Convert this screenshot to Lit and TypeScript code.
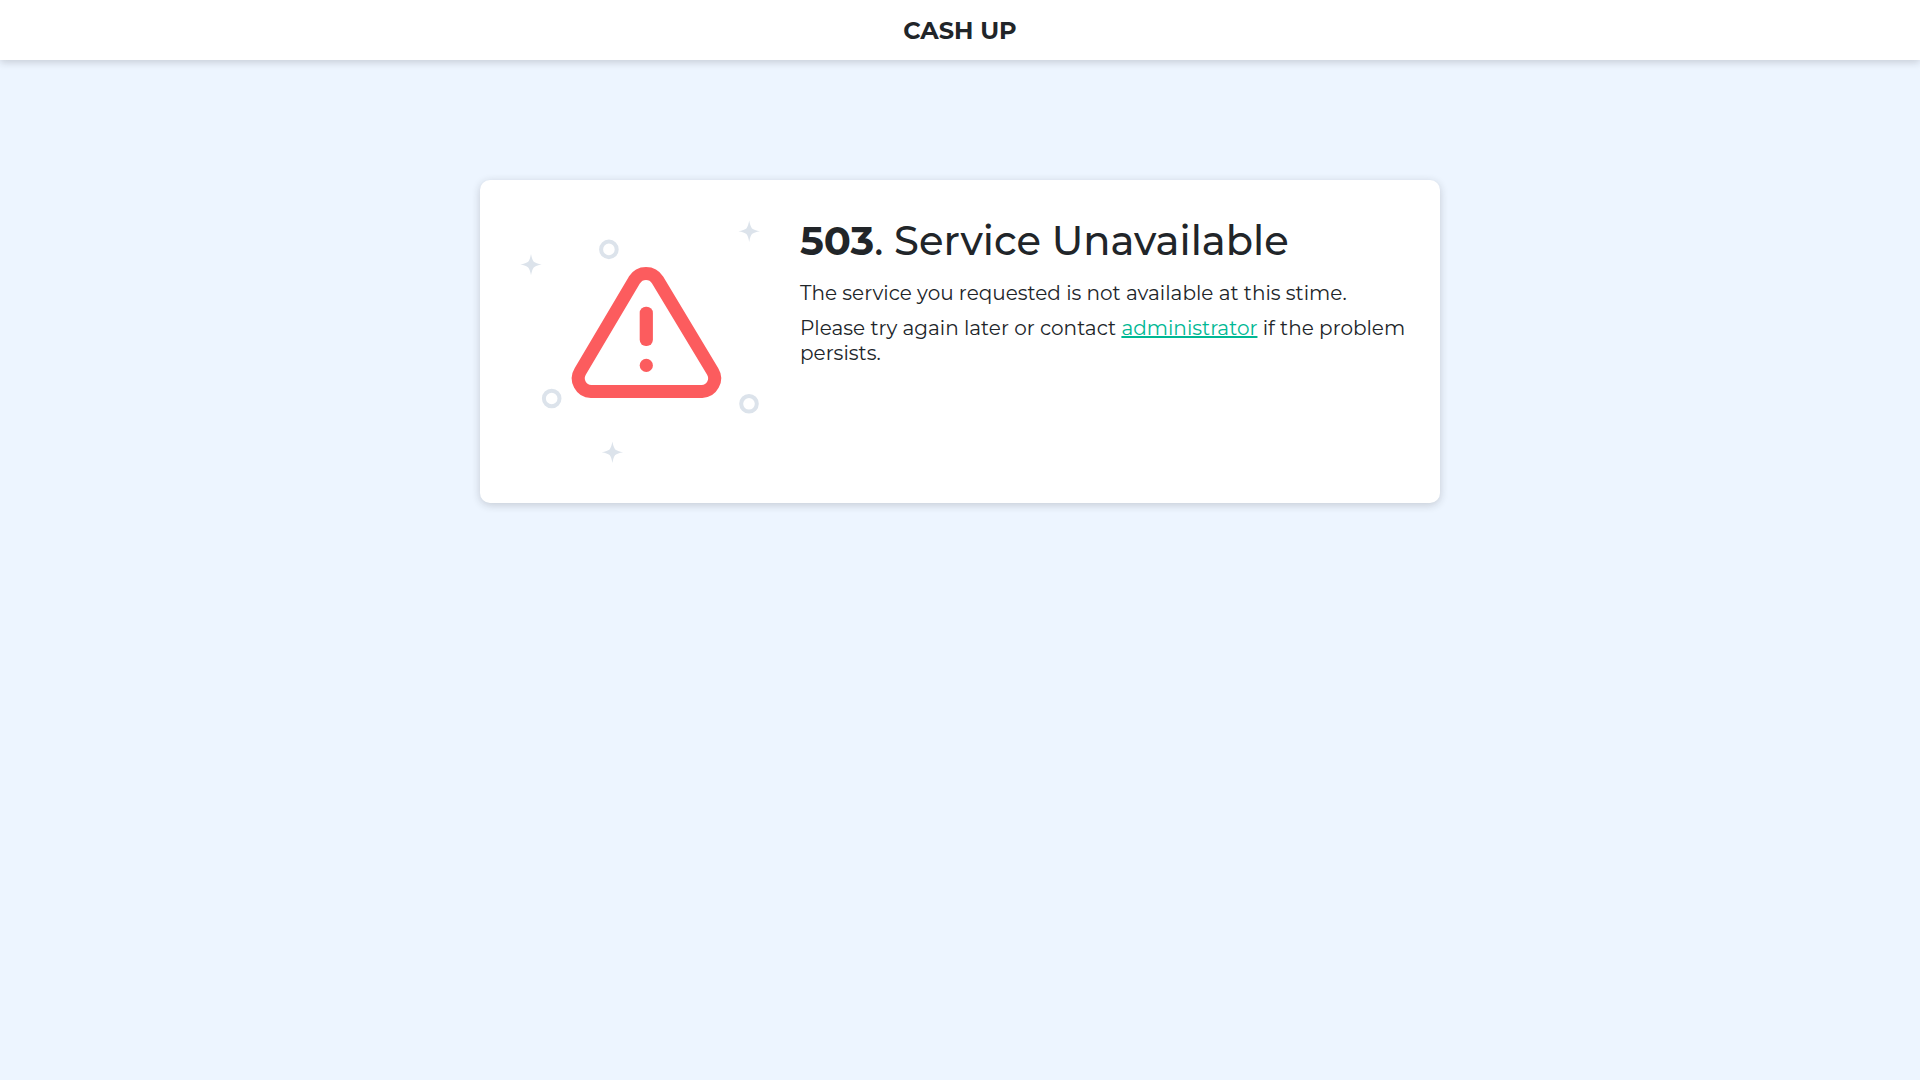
import { LitElement, html, css, svg } from "lit";
import { customElement } from "lit/decorators.js";

const STARS = [
  [11, 44.6],
  [229.2, 11.2],
  [92.4, 232.2],
];
const RINGS = [
  [88.9, 29.4],
  [31.7, 178.5],
  [229, 183.8],
];

@customElement("warning-art")
export class WarningArt extends LitElement {
  static styles = css`
    :host {
      display: block;
    }
    .art {
      display: block;
      width: 100%;
      height: auto;
    }
    .decor {
      fill: #dce3eb;
    }
    .ring {
      fill: none;
      stroke: #dce3eb;
      stroke-width: 4;
    }
    .outline {
      fill: none;
      stroke: #fc5c5e;
      stroke-width: 13;
    }
    .mark {
      fill: #fc5c5e;
    }
  `;

  render() {
    return html`
      <svg class="art" viewBox="0 0 240 243" aria-hidden="true">
        ${STARS.map(
          ([x, y]) => svg`<path class="decor" transform="translate(${x} ${y})"
            d="M0-10.7Q1-5 2.8-2.8Q5-1 10.7 0Q5 1 2.8 2.8Q1 5 0 10.7Q-1 5-2.8 2.8Q-5 1-10.7 0Q-5-1-2.8-2.8Q-1-5 0-10.7Z" />`
        )}
        ${RINGS.map(([x, y]) => svg`<circle class="ring" cx=${x} cy=${y} r="7.8" />`)}
        <path
          class="outline"
          d="M114.4 60A13.6 13.6 0 0 1 137.6 60L192.7 151.5A13.2 13.2 0 0 1 182 171.5H71A13.2 13.2 0 0 1 60.2 151.5Z"
        />
        <rect class="mark" x="119.7" y="86.8" width="13.2" height="39.2" rx="6.2" />
        <circle class="mark" cx="126.3" cy="145.4" r="6.6" />
      </svg>
    `;
  }
}

@customElement("app-root")
export class AppRoot extends LitElement {
  static styles = css`
    :host {
      display: flex;
      flex-direction: column;
      min-height: 100vh;
      background: #edf5ff;
      color: #212529;
      font-family: Montserrat, Inter, sans-serif;
      font-size: 20px;
      line-height: 25px;
    }
    .header {
      display: flex;
      justify-content: center;
      box-sizing: border-box;
      min-height: 60px;
      padding: 16px 20px 14px;
      background: #fff;
      box-shadow: 0 2px 8px rgba(33, 37, 41, 0.2);
      font-size: 24px;
      line-height: 30px;
      font-weight: 700;
    }
    .main {
      padding: 120px 20px;
    }
    .card {
      display: flex;
      gap: 40px;
      box-sizing: border-box;
      max-width: 960px;
      margin: 0 auto;
      padding: 40px 30px 40px 40px;
      background: #fff;
      border-radius: 10px;
      box-shadow: 0 2px 8px rgba(33, 37, 41, 0.2);
    }
    .picture {
      flex: 0 0 240px;
    }
    .message {
      flex: 1;
      min-width: 0;
    }
    .title {
      margin: 0 0 19px;
      font-size: 40px;
      line-height: 42px;
      font-weight: 500;
    }
    .code {
      font-weight: 700;
    }
    .text {
      margin: 0 0 10px;
    }
    .link {
      color: #00b894;
      text-decoration: underline;
    }
  `;

  render() {
    return html`
      <header class="header">CASH UP</header>
      <main class="main">
        <section class="card">
          <warning-art class="picture"></warning-art>
          <div class="message">
            <h1 class="title"><span class="code">503</span>. Service Unavailable</h1>
            <p class="text">The service you requested is not available at this stime.</p>
            <p class="text">
              Please try again later or contact
              <a class="link" href="mailto:administrator">administrator</a> if the problem persists.
            </p>
          </div>
        </section>
      </main>
    `;
  }
}
